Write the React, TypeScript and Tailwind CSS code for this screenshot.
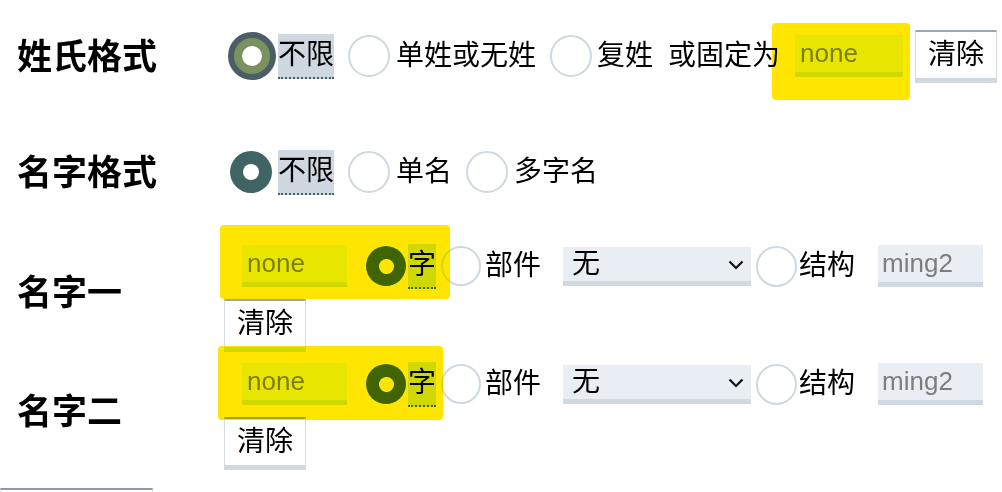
import React from "react";

const Unchecked = ({ cls }: { cls: string }) => (
  <div className={`shrink-0 rounded-full border-2 border-[#cfd8e0] bg-white ${cls}`} />
);

const TealRadio = ({ cls, dot }: { cls: string; dot: string }) => (
  <div className={`flex shrink-0 items-center justify-center rounded-full bg-[#3f6463] ${cls}`}>
    <div className={`rounded-full bg-white ${dot}`} />
  </div>
);

const Chip = ({ text, cls }: { text: string; cls: string }) => (
  <span
    className={`flex h-[45px] shrink-0 items-center border-b-2 border-dotted border-[#3f6463] bg-[#cfd8e0] text-[28px] leading-none ${cls}`}
  >
    {text}
  </span>
);

const Txt = ({ text, cls }: { text: string; cls: string }) => (
  <span className={`shrink-0 whitespace-nowrap text-[28px] leading-none ${cls}`}>{text}</span>
);

const Field = ({ ph, cls }: { ph: string; cls: string }) => (
  <input
    placeholder={ph}
    className={`h-[42px] shrink-0 border-b-[5px] border-[#d0d8e0] bg-[#e8eef4] text-[26px] leading-none text-black outline-none placeholder:text-[#7d7d7d] ${cls}`}
  />
);

const ClearBtn = ({ cls }: { cls: string }) => (
  <button
    className={`flex h-[53px] w-[82px] shrink-0 items-center justify-center border-x border-t-2 border-b-[5px] border-x-[#d5dce2] border-t-[#9ba7b1] border-b-[#d0d8e0] bg-white text-[28px] leading-none text-black ${cls}`}
  >
    清除
  </button>
);

const Label = ({ text }: { text: string }) => (
  <div className="w-[224px] shrink-0 self-center pl-[17px] text-[35px] font-bold leading-none text-black">
    {text}
  </div>
);

const NameLine = () => (
  <div className="flex h-[44px] items-center">
    <Field ph="none" cls="ml-[18px] w-[105px] h-[40px] pl-[5px]" />
    <TealRadio cls="ml-[19px] h-[40px] w-[40px]" dot="h-[15px] w-[15px]" />
    <Chip text="字" cls="ml-[2px] w-[28px]" />
    <Unchecked cls="ml-[5px] h-[40px] w-[40px]" />
    <Txt text="部件" cls="ml-[4px]" />
    <div className="relative ml-[22px] h-[39px] w-[188px] shrink-0">
      <select className="h-full w-full appearance-none border-b-[5px] border-[#d0d8e0] bg-[#e8eef4] pl-[9px] text-[28px] leading-none text-black outline-none">
        <option>无</option>
      </select>
      <svg
        className="pointer-events-none absolute left-[165px] top-[13px]"
        width="16"
        height="10"
        viewBox="0 0 16 10"
      >
        <polyline points="1.5,1.5 8,8 14.5,1.5" stroke="#111" strokeWidth="2.2" fill="none" />
      </svg>
    </div>
    <Unchecked cls="ml-[5px] h-[41px] w-[41px]" />
    <Txt text="结构" cls="ml-[2px]" />
    <Field ph="ming2" cls="ml-[23px] w-[105px] h-[40px] pl-[4px]" />
  </div>
);

export default function App() {
  return (
    <div className="relative h-[492px] w-[1002px] overflow-hidden bg-white font-['Liberation_Sans','Noto_Sans_CJK_SC',sans-serif] text-black">
      {/* Row 1 */}
      <div className="flex h-[112px] items-center">
        <Label text="姓氏格式" />
        <div className="flex items-center">
          <div className="ml-[4px] flex h-[48px] w-[48px] shrink-0 items-center justify-center rounded-full bg-[#4b5d66]">
            <div className="flex h-[36px] w-[36px] items-center justify-center rounded-full bg-[#7b9260]">
              <div className="h-[20px] w-[20px] rounded-full bg-white" />
            </div>
          </div>
          <Chip text="不限" cls="ml-[2px] w-[56px]" />
          <Unchecked cls="ml-[14px] h-[42px] w-[42px]" />
          <Txt text="单姓或无姓" cls="ml-[6px]" />
          <Unchecked cls="ml-[14px] h-[42px] w-[42px]" />
          <Txt text="复姓" cls="ml-[5px]" />
          <Txt text="或固定为" cls="ml-[15px]" />
          <Field ph="none" cls="ml-[15px] w-[108px] pl-[5px]" />
          <ClearBtn cls="ml-[12px]" />
        </div>
      </div>

      {/* Row 2 */}
      <div className="flex h-[120px] items-center">
        <Label text="名字格式" />
        <div className="flex items-center">
          <TealRadio cls="ml-[6px] h-[42px] w-[42px]" dot="h-[16px] w-[16px]" />
          <Chip text="不限" cls="ml-[6px] w-[56px]" />
          <Unchecked cls="ml-[14px] h-[42px] w-[42px]" />
          <Txt text="单名" cls="ml-[6px]" />
          <Unchecked cls="ml-[14px] h-[42px] w-[42px]" />
          <Txt text="多字名" cls="ml-[6px]" />
        </div>
      </div>

      {/* Row 3 */}
      <div className="flex h-[120px]">
        <Label text="名字一" />
        <div className="flex flex-col pt-[12px]">
          <NameLine />
          <ClearBtn cls="mt-[11px]" />
        </div>
      </div>

      {/* Row 4 */}
      <div className="flex h-[118px]">
        <Label text="名字二" />
        <div className="flex flex-col pt-[10px]">
          <NameLine />
          <ClearBtn cls="mt-[11px]" />
        </div>
      </div>

      <div className="mt-[18px] h-[12px] w-[153px] border-x border-t-2 border-x-[#d5dce2] border-t-[#8d9aa5] bg-white" />

      {/* highlighter marks */}
      <div className="pointer-events-none absolute left-[772px] top-[23px] h-[77px] w-[138px] rounded-[4px] bg-[#ffe500] mix-blend-darken" />
      <div className="pointer-events-none absolute left-[220px] top-[225px] h-[74px] w-[230px] rounded-[4px] bg-[#ffe500] mix-blend-darken" />
      <div className="pointer-events-none absolute left-[218px] top-[346px] h-[74px] w-[225px] rounded-[4px] bg-[#ffe500] mix-blend-darken" />
    </div>
  );
}
